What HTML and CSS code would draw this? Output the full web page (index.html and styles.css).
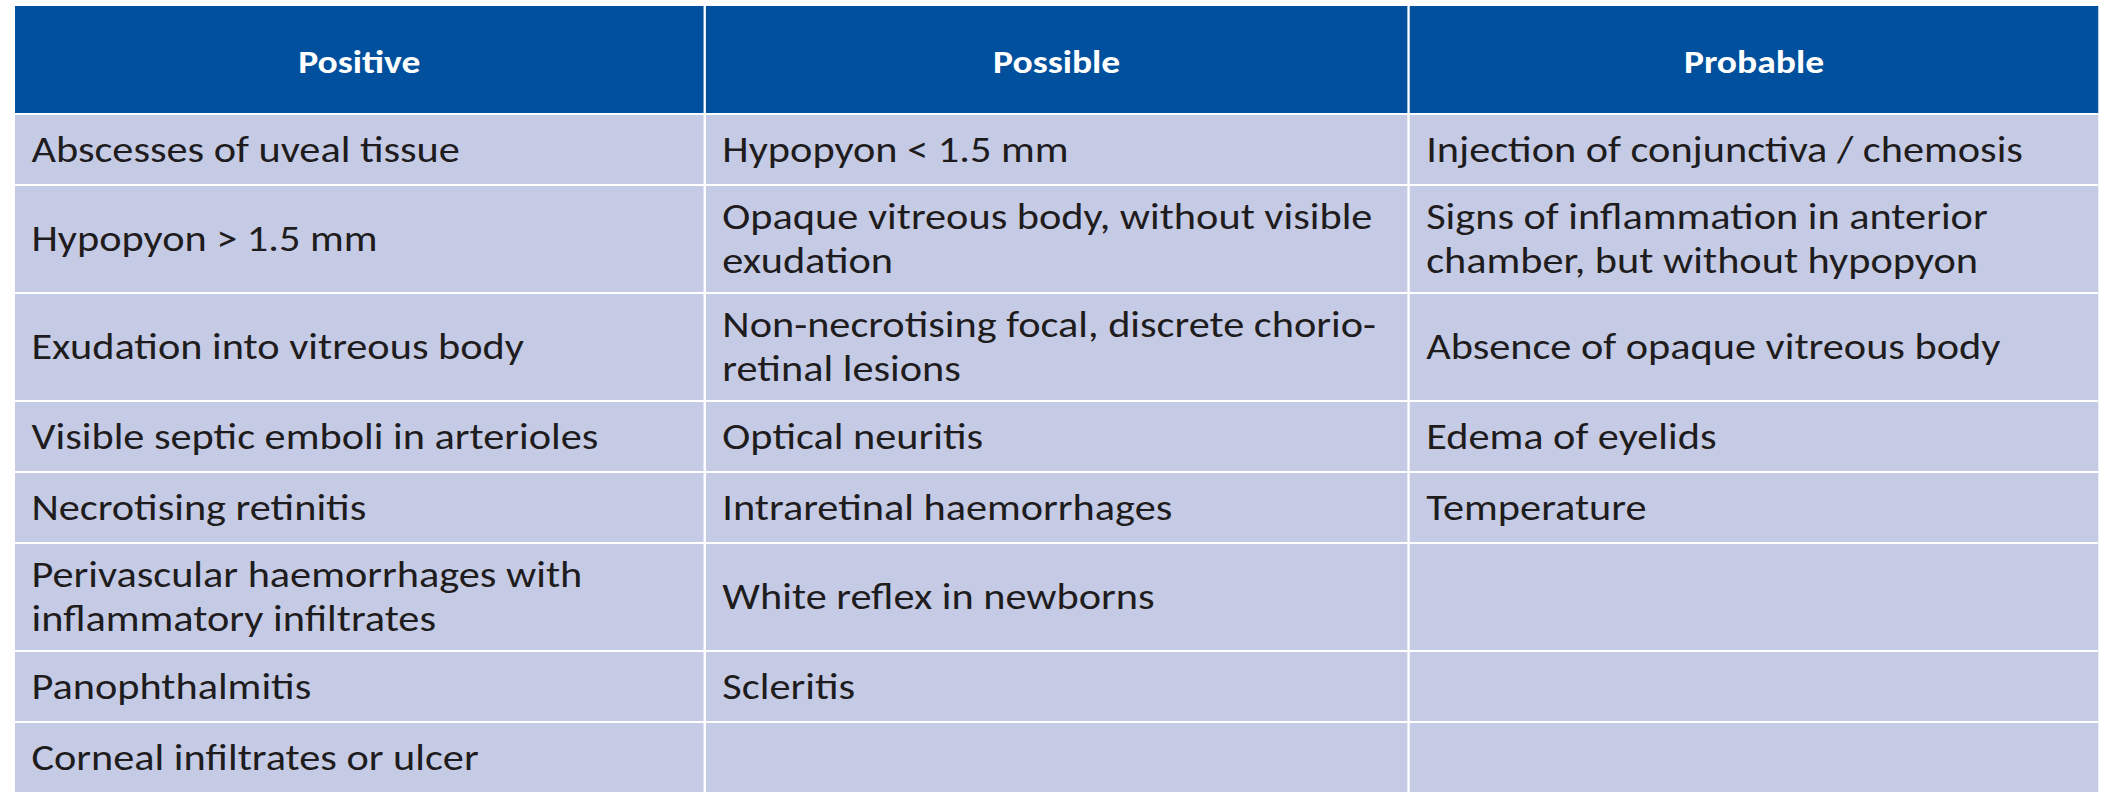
FILE: index.html
```html
<!DOCTYPE html>
<html lang="en">
<head>
<meta charset="utf-8">
<title>Endophthalmitis signs</title>
<link rel="stylesheet" href="styles.css">
</head>
<body>
<table class="signs">
  <colgroup>
    <col class="c1">
    <col class="c2">
    <col class="c3">
  </colgroup>
  <thead>
    <tr class="head">
      <th>Positive</th>
      <th>Possible</th>
      <th>Probable</th>
    </tr>
  </thead>
  <tbody>
    <tr class="r1">
      <td>Abscesses of uveal tissue</td>
      <td>Hypopyon &lt; 1.5 mm</td>
      <td>Injection of conjunctiva / chemosis</td>
    </tr>
    <tr class="r2">
      <td>Hypopyon &gt; 1.5 mm</td>
      <td>Opaque vitreous body, without visible<br>exudation</td>
      <td>Signs of inflammation in anterior<br>chamber, but without hypopyon</td>
    </tr>
    <tr class="r2">
      <td>Exudation into vitreous body</td>
      <td>Non-necrotising focal, discrete chorio-<br>retinal lesions</td>
      <td>Absence of opaque vitreous body</td>
    </tr>
    <tr class="r1">
      <td>Visible septic emboli in arterioles</td>
      <td>Optical neuritis</td>
      <td>Edema of eyelids</td>
    </tr>
    <tr class="r1">
      <td>Necrotising retinitis</td>
      <td>Intraretinal haemorrhages</td>
      <td>Temperature</td>
    </tr>
    <tr class="r2">
      <td>Perivascular haemorrhages with<br>inflammatory infiltrates</td>
      <td>White reflex in newborns</td>
      <td></td>
    </tr>
    <tr class="r1">
      <td>Panophthalmitis</td>
      <td>Scleritis</td>
      <td></td>
    </tr>
    <tr class="r1">
      <td>Corneal infiltrates or ulcer</td>
      <td></td>
      <td></td>
    </tr>
  </tbody>
</table>
</body>
</html>
```

FILE: styles.css
```css
html, body {
  margin: 0;
  padding: 0;
  background: #ffffff;
}

body {
  padding: 6px 0 0 15px;
}

/* The source slide is stretched horizontally (~1.175x); the table is laid
   out at natural width and widened with scaleX to reproduce that. */
.signs {
  width: 1773px;
  table-layout: fixed;
  border-collapse: collapse;
  font-family: Carlito, Calibri, Lato, "Liberation Sans", sans-serif;
  font-size: 36px;
  line-height: 44px;
  color: #1f1c1d;
  transform: scaleX(1.175);
  transform-origin: 0 0;
}

.c1 { width: 587px; }
.c2 { width: 599px; }
.c3 { width: 587px; }

.signs th,
.signs td {
  border: 2px solid #ffffff;
  vertical-align: middle;
  white-space: nowrap;
}

.signs tr > :first-child { border-left: none; }
.signs tr > :last-child { border-right: none; }
.signs thead th { border-top: none; }
.signs tbody tr:last-child td { border-bottom: none; }

.signs th {
  background: #00509d;
  color: #ffffff;
  font-size: 32px;
  font-weight: 700;
  text-align: center;
  height: 101px;
  padding: 6px 10px 0;
}

.signs td {
  background: #c5cbe5;
  text-align: left;
  padding: 0 14px;
}

.r1 td { height: 69px; }
.r2 td { height: 106px; }
```
